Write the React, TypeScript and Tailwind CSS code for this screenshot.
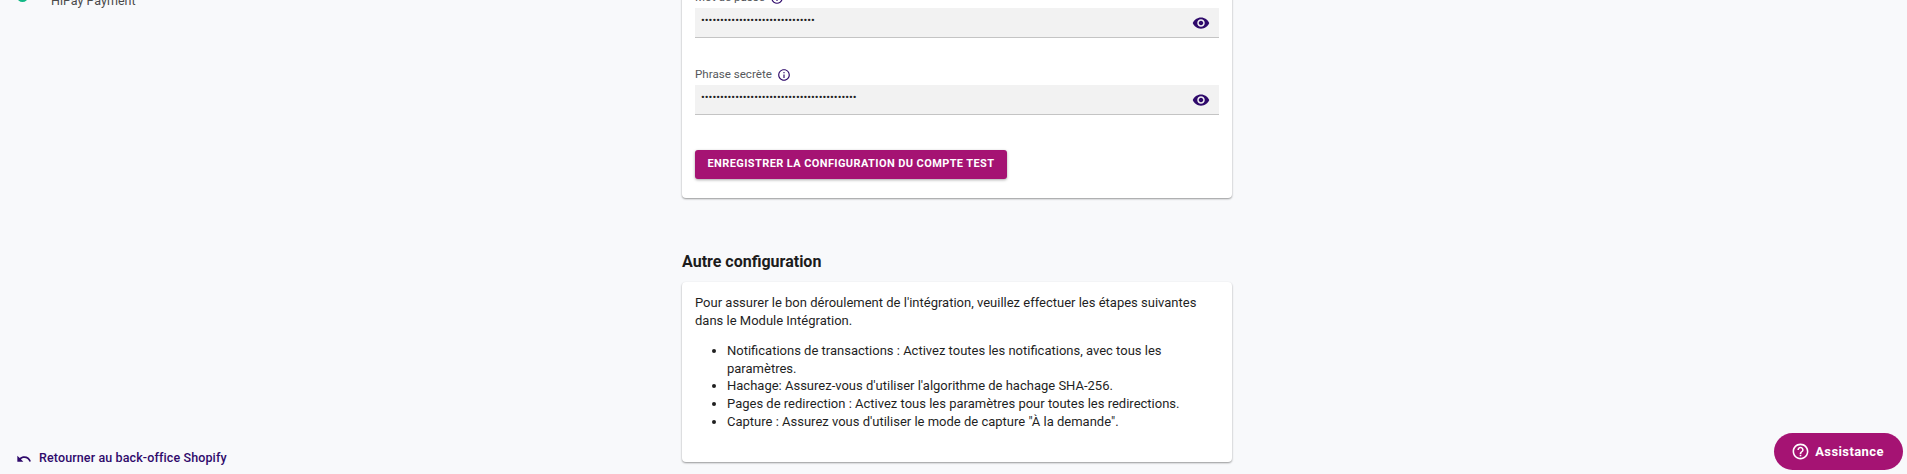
import React from 'react';

const INK = '#2f0a6b';

const EyeIcon = () => (
  <svg viewBox="0 0 24 24" className="w-[18px] h-[18px] fill-[#2f0a6b]">
    <path d="M12 4.5C7 4.5 2.73 7.61 1 12c1.73 4.39 6 7.5 11 7.5s9.27-3.11 11-7.5c-1.73-4.39-6-7.5-11-7.5zM12 17c-2.76 0-5-2.24-5-5s2.24-5 5-5 5 2.24 5 5-2.24 5-5 5zm0-8c-1.66 0-3 1.34-3 3s1.34 3 3 3 3-1.34 3-3-1.34-3-3-3z" />
  </svg>
);

const InfoIcon = () => (
  <svg viewBox="0 0 24 24" className="w-[14px] h-[14px] fill-[#2f0a6b]">
    <path d="M11 7h2v2h-2zm0 4h2v6h-2zm1-9C6.48 2 2 6.48 2 12s4.48 10 10 10 10-4.48 10-10S17.52 2 12 2zm0 18c-4.41 0-8-3.59-8-8s3.59-8 8-8 8 3.59 8 8-3.59 8-8 8z" />
  </svg>
);

const PasswordField = ({ label, value }: { label: string; value: string }) => (
  <div>
    <div className="flex items-center gap-[5px] h-[19px] pt-[1px] mb-[1px] text-[11.6px] text-[#55585c]">
      <span>{label}</span>
      <InfoIcon />
    </div>
    <div className="h-[30px] flex items-center justify-between bg-[#f2f2f2] border-b border-[#c4c4c4] pl-[6px] pr-[9px]">
      <input
        type="password"
        readOnly
        value={value}
        className="flex-1 bg-transparent outline-none text-[11.25px] text-[#222] -mt-[2px]"
      />
      <EyeIcon />
    </div>
  </div>
);

const Sidebar = () => (
  <aside className="w-[300px] h-full shrink-0 flex flex-col justify-between pl-[17px]">
    <div className="flex -mt-[9px] h-[18px]">
      <span className="w-[11px] h-[11px] rounded-full bg-[#12b886] shrink-0" />
      <span className="ml-[23px] pt-[1px] text-[12.5px] leading-[18px] text-[#4a4a4a]">HiPay Payment</span>
    </div>
    <div className="flex items-center gap-[7px] -ml-[1px] mb-[6px] text-[12.5px] font-medium tracking-[0.12px]" style={{ color: INK }}>
      <svg viewBox="0 0 24 24" className="w-[16px] h-[16px] fill-[#2f0a6b]">
        <path d="M12.5 8c-2.65 0-5.05.99-6.9 2.6L2 7v9h9l-3.62-3.62c1.39-1.16 3.16-1.88 5.12-1.88 3.54 0 6.55 2.31 7.6 5.5l2.37-.78C21.08 11.03 17.15 8 12.5 8z" />
      </svg>
      <span>Retourner au back-office Shopify</span>
    </div>
  </aside>
);

export default function App() {
  return (
    <div className="relative w-[1907px] h-[474px] overflow-hidden flex bg-[#f8f9fb] font-['Roboto',sans-serif]">
      <Sidebar />
      <main className="w-[550px] ml-[382px] -mt-[12px]">
        <section className="bg-white rounded-b-[4px] shadow-[0_1px_2px_rgba(0,0,0,0.4)] px-[13px] pb-[19px]">
          <div className="flex flex-col gap-[27px]">
            <PasswordField label="Mot de passe" value="••••••••••••••••••••••••••••••" />
            <PasswordField label="Phrase secrète" value="•••••••••••••••••••••••••••••••••••••••••" />
          </div>
          <button className="block mt-[35px] h-[29px] w-[312px] rounded-[3px] bg-[#a51373] text-white text-[11px] font-bold tracking-[0.4px] shadow-[0_1px_3px_rgba(0,0,0,0.35)]">
            ENREGISTRER LA CONFIGURATION DU COMPTE TEST
          </button>
        </section>

        <h2 className="mt-[54px] mb-[10px] text-[16px] leading-[20px] font-bold text-[#1c1c1c]">Autre configuration</h2>

        <section className="bg-white rounded-[4px] shadow-[0_1px_2px_rgba(0,0,0,0.4)] px-[13px] pt-[12px] pb-[32px] text-[13px] leading-[17.6px] text-[#1f1f1f]">
          <p>
            Pour assurer le bon déroulement de l'intégration, veuillez effectuer les étapes suivantes dans le Module
            Intégration.
          </p>
          <ul className="mt-[13px] list-disc pl-[32px]">
            <li>Notifications de transactions : Activez toutes les notifications, avec tous les paramètres.</li>
            <li>Hachage: Assurez-vous d'utiliser l'algorithme de hachage SHA-256.</li>
            <li>Pages de redirection : Activez tous les paramètres pour toutes les redirections.</li>
            <li>Capture : Assurez vous d'utiliser le mode de capture "À la demande".</li>
          </ul>
        </section>
      </main>

      <button className="absolute left-[1774px] top-[433px] w-[129px] h-[37px] pr-[2px] rounded-full bg-[#a51373] text-white flex items-center justify-center gap-[5px] text-[13px] font-bold tracking-[0.4px]">
        <svg viewBox="0 0 24 24" className="w-[19px] h-[19px] fill-white">
          <path d="M11 18h2v-2h-2v2zm1-16C6.48 2 2 6.48 2 12s4.48 10 10 10 10-4.48 10-10S17.52 2 12 2zm0 18c-4.41 0-8-3.59-8-8s3.59-8 8-8 8 3.59 8 8-3.59 8-8 8zm0-14c-2.21 0-4 1.79-4 4h2c0-1.1.9-2 2-2s2 .9 2 2c0 2-3 1.75-3 5h2c0-2.25 3-2.5 3-5 0-2.21-1.79-4-4-4z" />
        </svg>
        Assistance
      </button>
    </div>
  );
}
